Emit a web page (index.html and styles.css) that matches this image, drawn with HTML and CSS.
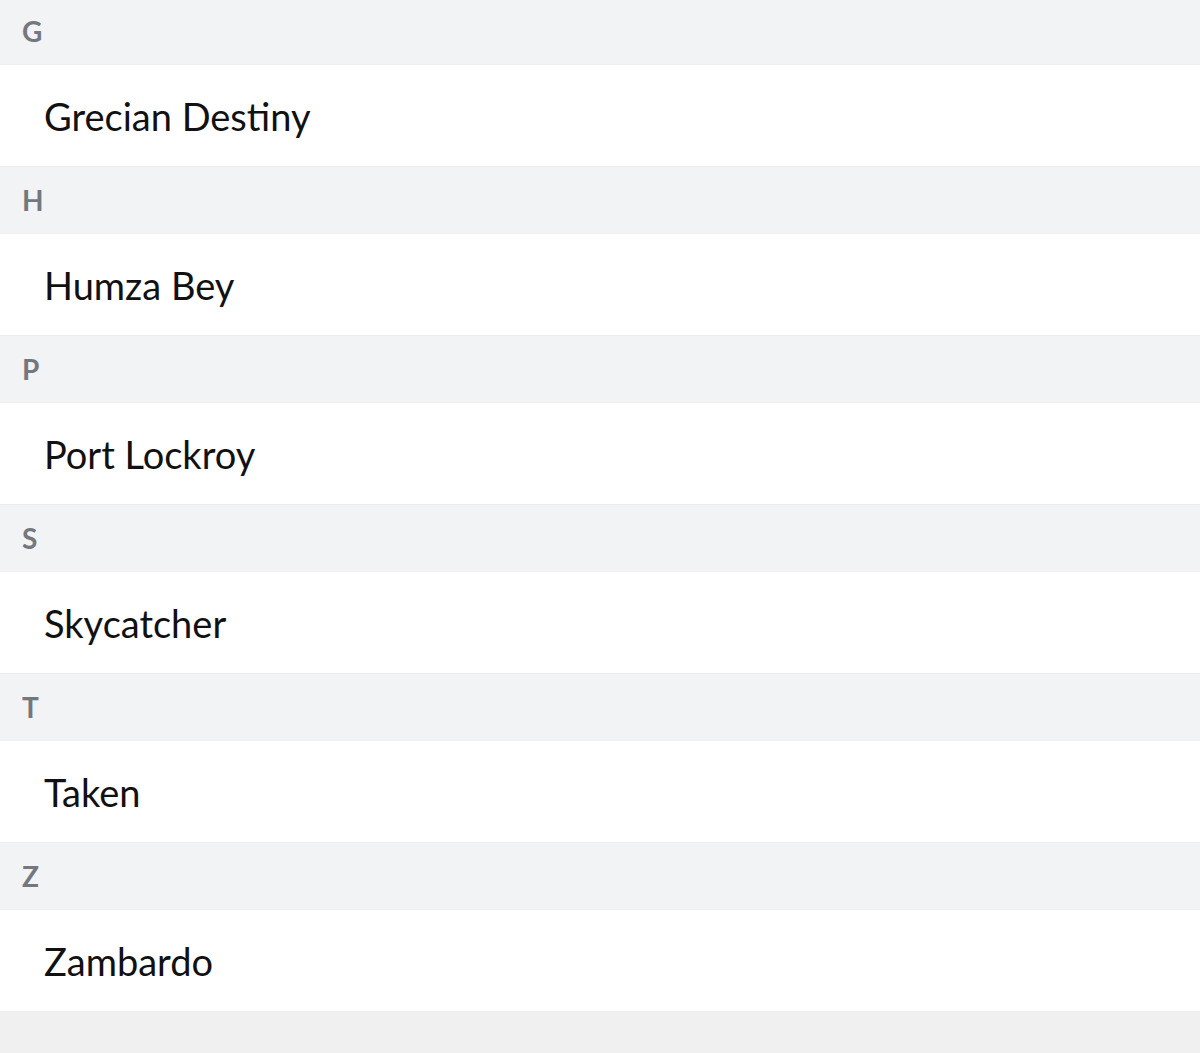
FILE: index.html
```html
<!DOCTYPE html>
<html>
<head>
<meta charset="utf-8">
<link rel="stylesheet" href="styles.css">
</head>
<body>
<div class="list">
  <section class="group">
    <div class="header">G</div>
    <div class="item">Grecian Destiny</div>
  </section>
  <section class="group">
    <div class="header">H</div>
    <div class="item">Humza Bey</div>
  </section>
  <section class="group">
    <div class="header">P</div>
    <div class="item">Port Lockroy</div>
  </section>
  <section class="group">
    <div class="header">S</div>
    <div class="item">Skycatcher</div>
  </section>
  <section class="group">
    <div class="header">T</div>
    <div class="item">Taken</div>
  </section>
  <section class="group">
    <div class="header">Z</div>
    <div class="item">Zambardo</div>
  </section>
</div>
</body>
</html>
```

FILE: styles.css
```css
html, body {
  margin: 0;
  padding: 0;
  background: #f0f0f0;
  font-family: Lato, "Noto Sans", sans-serif;
}
.list {
  margin-top: -2px;
  display: flex;
  flex-direction: column;
}
.group {
  display: flex;
  flex-direction: column;
}
.header {
  height: 67px;
  box-sizing: border-box;
  background: #f2f3f5;
  color: #74787e;
  font-size: 28px;
  font-weight: 700;
  display: flex;
  align-items: center;
  padding-left: 22px;
  border-bottom: 1px solid #eef0f2;
}
.item {
  height: 102px;
  box-sizing: border-box;
  background: #ffffff;
  color: #111111;
  font-size: 38px;
  display: flex;
  align-items: center;
  padding-left: 44px;
  border-bottom: 1px solid #ececec;
}
```
